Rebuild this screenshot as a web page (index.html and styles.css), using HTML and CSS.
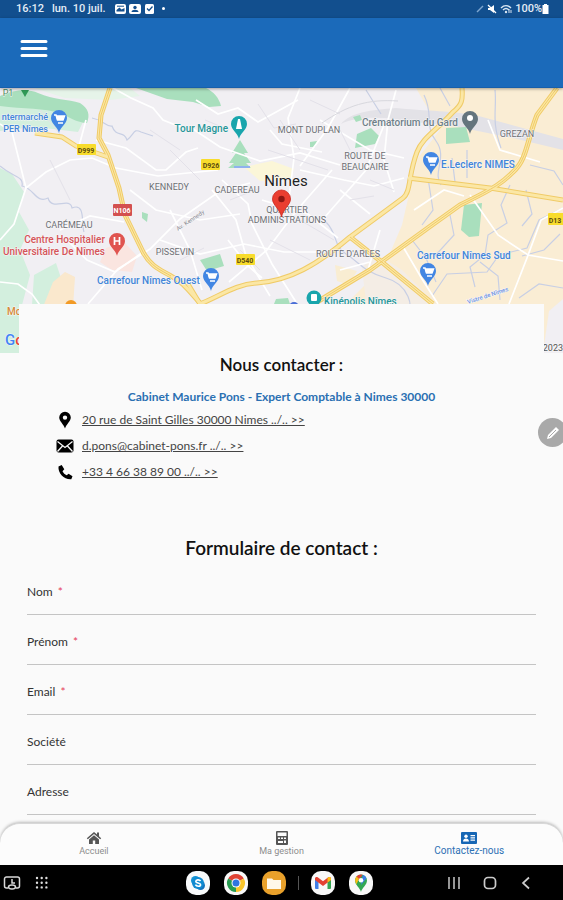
FILE: index.html
```html
<!DOCTYPE html>
<html lang="fr">
<head>
<meta charset="utf-8">
<meta name="viewport" content="width=device-width, initial-scale=1">
<title>Contactez-nous</title>
<link rel="stylesheet" href="styles.css">
</head>
<body>
<div class="status">
  <span>16:12</span>
  <span class="status-date">lun. 10 juil.</span>
  <svg class="status-notes" viewBox="0 0 54 12" aria-hidden="true">
    <rect x="1" y="1" width="11" height="10" rx="2" fill="#fff"/><path d="M2.500 8.500V7l3-2.500 2 2L10.500 5v3.500z" fill="#124f8e"/><path d="M3 3.200h7" stroke="#124f8e"/>
    <rect x="15" y="1" width="12" height="10" rx="2" fill="#fff"/><circle cx="21" cy="4.500" r="1.700" fill="#124f8e"/><path d="M17.500 9c0-3 7-3 7 0z" fill="#124f8e"/>
    <rect x="31" y="1" width="9" height="10" rx="1.500" fill="#fff"/><path d="M33 5.500l2 2 3.500-4" fill="none" stroke="#124f8e" stroke-width="1.300"/>
    <circle cx="49.500" cy="5.500" r="1.500" fill="#fff"/>
  </svg>
  <svg class="status-signals" viewBox="0 0 38 12" aria-hidden="true">
    <path d="M2 9l6-6" stroke="#7ea6cf" stroke-width="1.500"/>
    <path d="M13 5h2l4-3v8l-4-3h-2z" fill="#fff"/><path d="M13 2l8 8" stroke="#fff" stroke-width="1.300"/>
    <path d="M26 5c3-3 7-3 10 0M28 7c2-2 4-2 6 0" fill="none" stroke="#d8e5f2" stroke-width="1.400"/><circle cx="31" cy="9" r="1.200" fill="#d8e5f2"/><path d="M34 6v4M36 7v3" stroke="#d8e5f2"/>
  </svg>
  <span>100%</span>
  <svg class="status-battery" viewBox="0 0 7 12" aria-hidden="true"><path d="M2 1h3v1h1.500v9h-6V2H2z" fill="#fff"/></svg>
</div>

<header class="appbar">
  <button class="menu" type="button" aria-label="Menu"><svg viewBox="0 0 28 20" aria-hidden="true"><path d="M2 2.500h24M2 9.500h24M2 16.500h24" stroke="#fff" stroke-width="3" stroke-linecap="round"/></svg></button>
</header>

<main class="content">
  <svg class="map" viewBox="0 88 563 265" preserveAspectRatio="xMidYMid slice" role="img" aria-label="Plan de Nîmes">
    <rect y="88" width="563" height="265" fill="#f1eff3"/>
    <path d="M416 88H563V353H325L350 300 385 265 402 225 410 190 418 158 440 130z" fill="#faedd4"/>
    <path d="M372 353l-10-85 14-14 26 16 40 40z" fill="#f4ede5"/>
    <path d="M543 353l6-42 14-12v54z" fill="#f1eff3"/>
    <path d="M396 108c40 4 60 2 90 10l77 21v11l-50-12-60-12-38-4c-30-6-60-6-74 2 10-12 30-14 55-16z" fill="#e3e2e7"/>
    <g fill="#d3efde">
      <path d="M0 104l40-6 45 20-7 14-25-3-20-2-33 4z"/>
      <path d="M0 168l12 6 12 18-5 20 10 18-9 20 10 25-8 30-3 48H0z"/>
      <path d="M34 275l22-12 6 18-12 10-4 14H32z"/>
      <path d="M34 88h80l16 0 10 8-30 4-45-2z" fill="#e6f4e9"/>
    </g>
    <path d="M53 282l12-10 10 5-2 30H43z" fill="#fae8cd"/>
    <path d="M106 248l18-6 13 14-5 16-20-2-12-8z" fill="#fae5e0"/>
    <path d="M244 167l28-6 22 8-4 10-30 2z" fill="#fbf6d8"/>
    <path d="M335 265l22 6-8 14-12-4z" fill="#f9edd2"/>
    <g fill="#a9dfbd">
      <path d="M0 96c18-8 30-6 38-3 16 7 30 6 42 10 9 6 10 12 7 20-10 0-19-7-28-10-13-5-36-4-59-7z"/>
      <path d="M136 88h70c8 4 13 10 15 18l-12 1-16-5-26-3z"/>
      <path d="M240 140l8 13h-4l7 10h-5l5 5h-23l6-5h-5l7-10h-4z"/>
      <path d="M200 260l20-6 4 12-17 5z"/>
      <path d="M357 134l14-6 8 8-4 8-20 4z"/><path d="M353 117l7-2 2 5-6 2z"/>
      <path d="M446 128l20-1 4 15-24 2z"/>
      <path d="M464 205l18-2-3 33-10 1-8-7z"/>
      <path d="M276 299l12-1 2 6h-16z"/><path d="M310 142l7-1-2 6h-5z"/>
      <path d="M142 212l6 2-1 8-5-4z"/>
    </g>
    <path d="M234 167h10l6 0" stroke="#8fb2ee" stroke-width="2"/>
    <path d="M21 90l8 0-4 7z" fill="#2f9a57"/>
    <g fill="none" stroke="#c8cfe4" stroke-width="1.200">
      <path d="M0 166c14 12 24 10 22 20 12 2 14 18 26 12 4 14 22-2 24 10 14-6 9 16 12 24"/>
      <path d="M92 118c12 2 14 9 20 8 4 12 12 4 15 14 8-6 6-12 14-8l12 4"/>
      <path d="M326 222c12 12 7 24 20 32s18 18 40 24 30 30 20 40"/>
      <path d="M424 95c10 20 0 30 12 46s-4 32 5 44"/><path d="M495 90c2 20-4 30 6 58"/>
      <path d="M467 150v28M452 158l3 24M428 178l5 32-11 15"/>
      <path d="M510 185l-9 20 6 18-19 12-3 20-15 12 5 20"/>
      <path d="M563 208l-24 12-12 28-28 7-12 17-40 2-15 22"/>
      <path d="M526 190l6 24-10 12M450 215l4 20-20 22M412 240l14 18 10 24"/>
      <path d="M560 234l-16 16-22 6M563 288l-24-4-20 14M530 165l24 6 9 14M480 262l18 14 2 24"/>
      <path d="M366 90l15 24M440 88l10 18"/>
    </g>
    <g fill="none" stroke="#fff" stroke-width="1.700">
      <path d="M0 124l12 8 8 32 6 24-12 36-14 16"/>
      <path d="M26 188l20-16 24-12 22-2 24 10 42 8 60-6"/>
      <path d="M86 120l-8 30M113 88l18 10 22 10 10 12 20 8M96 140l30 8 30 22 10 0 20-18 12-4"/>
      <path d="M0 282l18 2 14 10 10 14M88 304l30-35 32-20 30-30 40-28 30-8"/>
      <path d="M67 240l20 20 28 12 28-20M130 190l26 20 44 10 40-6"/>
      <path d="M196 100l22 14 20-6 20 14 40-22M190 127l30 20 40 14 40-8 40 12"/>
      <path d="M300 88l-12 30 6 40-5 40M350 88l-22 40-28 38M222 180l26 24 4 20 20 40 24 38"/>
      <path d="M212 190l24 30 10 36 24 40M262 200l46 14 30 24M332 170l-35 40-30 40-38 32"/>
      <path d="M300 170l44 10 30 6 30-8M320 120l50 30 34 8M340 190l30 24M386 120l-20 50-42 48"/>
      <path d="M160 240l40 14 44-10 40 8 34 0M170 210l20 40 12 40M228 240l20 26 14 12"/>
      <path d="M396 90l-8 30-4 40 10 32M270 130l12 14 40 8M340 270l30-8M380 230l-12 40"/>
      <path d="M563 208l-22 12-14 38-18 46M402 245l20 34 16 25"/>
      <path d="M414 210l30-20 20 6M470 195l28 40 30 20 35 6M488 120l12 30 40 12M60 230l30-14 34 6"/>
    </g>
    <g fill="none" stroke="#e3e1e9" stroke-width="1">
      <path d="M205 120l24 10M258 104l16 24 22-4M280 120l20 30M310 100l30 14M268 150l60 20M300 220l34 20M270 240l40 20M230 200l30-12M170 150l30 30M40 110l20 24M50 160l20 40M150 130l30 20M180 260l24-12M240 250l20 20M370 180l24 10M350 200l24-4M340 130l10 20"/>
    </g>
    <path d="M398 101c-30-2-50 4-76 22" fill="none" stroke="#d8d8de"/>
    <g fill="none" stroke-linejoin="round">
      <g stroke="#f0cb67" stroke-width="5">
        <path d="M110 88l-9 27-2 23 9 17 11 33 6 27 18 37c8 15 18 18 28 24 12 6 18 15 29 27"/>
        <path d="M35 133l27 4 14 9 32 11"/>
        <path d="M188 284l12 20c20-8 36-20 57-21 32-2 60-18 93-46l30-22 23-17c8-6 5-22 14-46 5-14 20-22 36-40 9-7 10-12 9-24"/>
        <path d="M408 178l82 10 73 12M557 88l-20 27c-10 25-10 45-24 57-10 10-16 15-53 33l-28 20-62 45-58 35M350 237l33 26 50 41"/>
      </g>
      <g stroke="#fbe7a5" stroke-width="3">
        <path d="M110 88l-9 27-2 23 9 17 11 33 6 27 18 37c8 15 18 18 28 24 12 6 18 15 29 27"/>
        <path d="M35 133l27 4 14 9 32 11"/>
        <path d="M188 284l12 20c20-8 36-20 57-21 32-2 60-18 93-46l30-22 23-17c8-6 5-22 14-46 5-14 20-22 36-40 9-7 10-12 9-24"/>
        <path d="M408 178l82 10 73 12M557 88l-20 27c-10 25-10 45-24 57-10 10-16 15-53 33l-28 20-62 45-58 35M350 237l33 26 50 41"/>
      </g>
      <path stroke="#f0cb67" stroke-width="1" d="M110 88l-9 27-2 23 9 17 11 33 6 27 18 37c8 15 18 18 28 24M557 88l-20 27c-10 25-10 45-24 57-10 10-16 15-53 33l-28 20-62 45-58 35M350 237l33 26 50 41"/>
    </g>
    <g class="shield" text-anchor="middle">
      <rect x="77" y="144" width="19" height="11" rx="1" fill="#f8dc2c"/><text x="86" y="153">D999</text>
      <rect x="201" y="159" width="19" height="11" rx="1" fill="#f8dc2c"/><text x="211" y="168">D926</text>
      <rect x="236" y="254" width="19" height="11" rx="1" fill="#f8dc2c"/><text x="245" y="263">D540</text>
      <rect x="548" y="213" width="20" height="12" rx="1" fill="#f8dc2c"/><text x="555" y="223">D13</text>
      <rect x="113" y="204" width="19" height="12" rx="1" fill="#d3504f"/><text class="national" x="122" y="213">N106</text>
    </g>
    <g class="area" text-anchor="middle">
      <text x="309" y="133">MONT DUPLAN</text>
      <text x="365" y="159">ROUTE DE</text><text x="365" y="170">BEAUCAIRE</text>
      <text x="517" y="137">GREZAN</text><text x="169" y="190">KENNEDY</text><text x="237" y="193">CADEREAU</text>
      <text x="69" y="228">CARÉMEAU</text><text x="175" y="255">PISSEVIN</text>
      <text x="287" y="213">QUARTIER</text><text x="287" y="223">ADMINISTRATIONS</text>
      <text x="348" y="257">ROUTE D'ARLES</text>
      <text x="8" y="96" fill="#4b8b61">P1</text>
    </g>
    <text class="street" transform="translate(178 231) rotate(-34)">Av. Kennedy</text>
    <text class="city" x="286" y="186" text-anchor="middle">Nîmes</text>
    <g class="place">
      <g class="small-place" fill="#4285d8"><text x="48" y="120" text-anchor="end">ntermarché</text><text x="48" y="132" text-anchor="end">PER Nîmes</text></g>
      <g fill="#4285d8"><text x="97" y="284">Carrefour Nîmes Ouest</text><text x="417" y="259">Carrefour Nîmes Sud</text><text x="441" y="168">E.Leclerc NIMES</text></g>
      <g fill="#27969a"><text x="228" y="132" text-anchor="end">Tour Magne</text><text x="324" y="305">Kinépolis Nîmes</text></g>
      <text x="458" y="126" text-anchor="end" fill="#6e7f89">Crématorium du Gard</text>
      <g fill="#d55358" text-anchor="end"><text x="105" y="243">Centre Hospitalier</text><text x="105" y="255">Universitaire De Nîmes</text></g>
      <text x="7" y="315" fill="#d58a38">Mc</text>
      <text x="468" y="304" class="street river" transform="rotate(-18 468 304)">Vistre de Nîmes</text>
    </g>
    <defs>
      <path id="pin" d="M0 12C-1 6-8 3-8-3a8 8 0 0 1 16 0C8 3 1 6 0 12z"/>
      <path id="cart" d="M-5-6h2l1.500 5H4l1.500-4h-8M-1 2h5" fill="none" stroke="#fff" stroke-width="1.500"/>
      <path id="cartfill" d="M-3-5h8L4-1h-6z" fill="#fff"/>
    </defs>
    <g fill="#4286e3"><g transform="translate(59 121)"><use href="#pin"/><use href="#cart"/><use href="#cartfill"/></g><g transform="translate(211 279)"><use href="#pin"/><use href="#cart"/><use href="#cartfill"/></g><g transform="translate(431 163)"><use href="#pin"/><use href="#cart"/><use href="#cartfill"/></g><g transform="translate(428 274)"><use href="#pin"/><use href="#cart"/><use href="#cartfill"/></g></g>
    <use href="#pin" transform="translate(239 127)" fill="#19a5ac"/><path d="M238 119h2l2 10h-6z" fill="#fff"/>
    <use href="#pin" transform="translate(470 122)" fill="#64747d"/><circle cx="470" cy="118" r="3" fill="#fff"/>
    <use href="#pin" transform="translate(117 244)" fill="#e0544f"/><path d="M114.500 237v8M119.500 237v8M114.500 241h5" stroke="#fff" stroke-width="1.700"/>
    <circle cx="314" cy="298" r="7.500" fill="#19a5ac"/><rect x="311" y="294" width="6" height="7" rx="1" fill="#fff"/>
    <circle cx="71" cy="306" r="6" fill="#f29a25"/><circle cx="294" cy="307" r="5" fill="#4a6ed6"/>
    <path d="M281.500 217C280 209 272.500 205 272.500 199a9 9 0 0 1 18 0C290.500 205 283 209 281.500 217z" fill="#ea3e30" stroke="#c8281f" stroke-width=".8"/><circle cx="281.500" cy="199" r="3.200" fill="#8d1712"/>
    <g class="google"><text x="5" y="345"><tspan fill="#4285f4">G</tspan><tspan fill="#ea4335">o</tspan></text></g>
    <text class="copyright" x="563" y="351" text-anchor="end">2023</text>
  </svg>

  <section class="card">
    <h1 class="title">Nous contacter :</h1>
    <p class="firm">Cabinet Maurice Pons - Expert Comptable à Nimes 30000</p>
    <ul class="contacts">
      <li><svg viewBox="0 0 18 18" aria-hidden="true"><path fill-rule="evenodd" d="M9 17.500C7.800 13.500 3.200 10 3.200 6.500a5.800 5.800 0 0 1 11.600 0C14.800 10 10.200 13.500 9 17.500zM9 4.400a2.200 2.200 0 1 0 0 4.400 2.200 2.200 0 0 0 0-4.400z"/></svg><a href="#adresse">20 rue de Saint Gilles 30000 Nimes ../.. &gt;&gt;</a></li>
      <li><svg viewBox="0 0 18 18" aria-hidden="true"><rect x=".5" y="2.500" width="17" height="13" rx="2"/><path d="M1.500 4.500L9 10.500l7.500-6M1.500 14.500l5-5.500M16.500 14.500l-5-5.500" fill="none" stroke="#fafafa" stroke-width="1.300"/></svg><a href="mailto:d.pons@cabinet-pons.fr">d.pons@cabinet-pons.fr ../.. &gt;&gt;</a></li>
      <li><svg viewBox="0 0 18 18" aria-hidden="true"><path d="M2.500 3.500L5.700 2l2.600 4.200-1.800 2c1 2 2.300 3.200 4.200 4.100l1.900-1.600 3.900 2.600-1.200 3C8.500 17 1.800 10.500 2.500 3.500z"/></svg><a href="tel:+33466388900">+33 4 66 38 89 00 ../.. &gt;&gt;</a></li>
    </ul>
  </section>

  <form class="form">
    <h2 class="title form-title">Formulaire de contact :</h2>
    <div class="field"><label for="nom">Nom <span class="req">*</span></label><input id="nom" type="text" required></div>
    <div class="field"><label for="prenom">Prénom <span class="req">*</span></label><input id="prenom" type="text" required></div>
    <div class="field"><label for="email">Email <span class="req">*</span></label><input id="email" type="email" required></div>
    <div class="field"><label for="societe">Société</label><input id="societe" type="text"></div>
    <div class="field"><label for="adresse">Adresse</label><input id="adresse" type="text"></div>
  </form>
</main>

<button class="pen" type="button" aria-label="Stylet"><svg viewBox="0 0 16 16" aria-hidden="true"><path d="M2 14l1-4 8-8 3 3-8 8z" fill="#fff"/><path d="M4 12l7-7" stroke="#aaa"/></svg></button>

<nav class="tabs">
  <a href="#accueil"><svg viewBox="0 0 16 14" aria-hidden="true"><path d="M8 1L.8 7.200l1 1L8 3l6.200 5.200 1-1L13 5.300V1.500h-2v2.100z"/><path d="M8 4.200L3 8.400V13h3.800V9.500h2.400V13H13V8.400z"/></svg>Accueil</a>
  <a href="#gestion"><svg viewBox="0 0 16 14" aria-hidden="true"><path fill-rule="evenodd" d="M3 0h10a1 1 0 0 1 1 1v12a1 1 0 0 1-1 1H3a1 1 0 0 1-1-1V1a1 1 0 0 1 1-1zM3.500 1.500v3.500h9V1.500zM4 6.500V8h2V6.500zM7 6.500V8h2V6.500zM10 6.500V8h2V6.500zM4 10v2h5v-2zM10 9.500V12h2V9.500z"/></svg>Ma gestion</a>
  <a class="active" href="#contact" aria-current="page"><svg viewBox="0 0 16 14" aria-hidden="true"><rect y="1" width="16" height="12" rx="1"/><g fill="#fff"><circle cx="5" cy="5.300" r="1.700"/><path d="M2 10.500c0-4 6-4 6 0zM9.500 4h4.500v1.200H9.500zM9.500 6.300h4.500v1.200H9.500zM9.500 8.600h4.500v1.200H9.500z"/></g></svg>Contactez-nous</a>
</nav>

<footer class="dock">
  <div class="dock-group shortcuts">
    <button type="button" aria-label="Récents"><svg class="glyph" viewBox="0 0 18 18" fill="none" stroke="#d8d8d8" stroke-width="1.500" aria-hidden="true"><path d="M5 14H3.500a2 2 0 0 1-2-2V5a2 2 0 0 1 2-2h11a2 2 0 0 1 2 2v7a2 2 0 0 1-2 2H13M9 5v4h3"/><ellipse cx="9" cy="13" rx="3.500" ry="2"/></svg></button>
    <button type="button" aria-label="Applications"><svg class="glyph" viewBox="0 0 18 18" fill="none" stroke="#ddd" stroke-width="2.400" stroke-linecap="round" stroke-dasharray="0 4.700" aria-hidden="true"><path d="M4 4h10M4 8.700h10M4 13.400h10"/></svg></button>
  </div>
  <div class="dock-group apps">
    <button type="button" aria-label="Skype"><svg viewBox="0 0 24 24" aria-hidden="true"><rect width="24" height="24" rx="10" fill="#f8fafb"/><circle cx="9.500" cy="9.500" r="4.500" fill="#1594d6"/><circle cx="14.500" cy="14.500" r="4.500" fill="#1473bd"/><circle cx="12" cy="12" r="6" fill="#108bd1"/><path d="M14.500 10C13.500 8.300 9.800 8.500 9.800 10.500c0 2 4.800 1 4.800 3.200 0 2-4.200 2-5.200 0" fill="none" stroke="#fff" stroke-width="1.600"/></svg></button>
    <button type="button" aria-label="Chrome"><svg viewBox="0 0 24 24" aria-hidden="true"><rect width="24" height="24" rx="10" fill="#f8f8f8"/><path d="M12 12L4.200 7.500a9 9 0 0 1 15.600 0z" fill="#df4335"/><path d="M12 12L19.800 7.500A9 9 0 0 1 12 21z" fill="#f9c52b"/><path d="M12 12v9A9 9 0 0 1 4.200 7.500z" fill="#279b50"/><circle cx="12" cy="12" r="4.500" fill="#fff"/><circle cx="12" cy="12" r="3.500" fill="#2f74e0"/></svg></button>
    <button type="button" aria-label="Mes fichiers"><svg viewBox="0 0 24 24" aria-hidden="true"><rect width="24" height="24" rx="10" fill="#e9a12b"/><path d="M5 7.500h5l1.500 1.500H19v9H5z" fill="#fff8e9"/></svg></button>
    <span class="sep"></span>
    <button type="button" aria-label="Gmail"><svg viewBox="0 0 24 24" aria-hidden="true"><rect width="24" height="24" rx="10" fill="#f8f8f8"/><path d="M4 8l3.500 2.500V18H5a1 1 0 0 1-1-1z" fill="#3f7ee8"/><path d="M20 8l-3.500 2.500V18H19a1 1 0 0 0 1-1z" fill="#35a653"/><path d="M4 9V7.500c0-1.500 1.500-2 2.700-1.200L12 10.300l5.300-4c1.200-.8 2.700-.3 2.700 1.200V9l-8 6z" fill="#e34133"/><path d="M16.500 7v4.600L20 9V7.500c0-1.500-1.500-2-2.700-1.200z" fill="#f9bd17"/></svg></button>
    <button type="button" aria-label="Maps"><svg viewBox="0 0 24 24" aria-hidden="true"><rect width="24" height="24" rx="10" fill="#f8f8f8"/><path d="M12 21C11.200 17 6 14 6 9.500a6 6 0 0 1 12 0C18 14 12.800 17 12 21z" fill="#32a852"/><path d="M7.400 5.500A6 6 0 0 1 13.800 3.800L9.500 9z" fill="#df4335"/><path d="M13.800 3.800A6 6 0 0 1 17.500 7.200L12 14z" fill="#3b7de9"/><path d="M7.400 5.500L10 7.800 7.500 13.200C6 11 5.500 8 7.400 5.500z" fill="#f9bc15"/><circle cx="12" cy="9.300" r="2.300" fill="#fff"/></svg></button>
  </div>
  <div class="dock-group system">
    <button type="button" aria-label="Applications récentes"><svg class="glyph" viewBox="0 0 18 18" stroke="#bbb" stroke-width="1.600" aria-hidden="true"><path d="M4 3v12M9 3v12M14 3v12"/></svg></button>
    <button type="button" aria-label="Écran d'accueil"><svg class="glyph" viewBox="0 0 18 18" fill="none" stroke="#ccc" stroke-width="1.700" aria-hidden="true"><rect x="3.500" y="3.500" width="11" height="11" rx="3.500"/></svg></button>
    <button type="button" aria-label="Retour"><svg class="glyph" viewBox="0 0 18 18" fill="none" stroke="#ccc" stroke-width="1.700" aria-hidden="true"><path d="M12 3.500L6 9l6 5.500"/></svg></button>
  </div>
</footer>
</body>
</html>
```
FILE: styles.css
```css
* { box-sizing: border-box; }
body {
  margin: 0;
  height: 100vh;
  display: flex;
  flex-direction: column;
  overflow: hidden;
  background: #fafafa;
  color: #222;
  font-family: Lato, "Liberation Sans", sans-serif;
}
button { border: 0; padding: 0; background: none; display: flex; }
svg { display: block; flex: none; }

.status {
  flex: none;
  height: 18px;
  padding: 0 14px 0 16px;
  display: flex;
  align-items: center;
  background: #124f8e;
  color: #e4edf6;
  font: 500 11px/18px Roboto, sans-serif;
}
.status-date { margin-left: 8px; }
.status-notes { width: 54px; height: 12px; margin-left: 8px; }
.status-signals { width: 38px; height: 12px; margin-left: auto; margin-right: 2px; }
.status-battery { width: 7px; height: 12px; }

.appbar {
  flex: none;
  height: 70px;
  padding: 0 20px;
  display: flex;
  align-items: flex-start;
  background: #1b6aba;
  border-bottom: 1px solid #175fab;
  box-shadow: 0 1px 3px rgba(0, 0, 0, .35);
  z-index: 1;
}
.menu { margin-top: 21px; }
.menu svg { width: 28px; height: 20px; }

.content { flex: 1; min-height: 0; overflow-y: auto; scrollbar-width: none; }
.map { width: 100%; height: 265px; font-family: Roboto, sans-serif; }
.map text { paint-order: stroke; stroke: #f8f7f8; stroke-width: 1px; stroke-linejoin: round; }
.map .shield text { stroke: none; font-size: 7px; font-weight: 700; fill: #5c4c10; }
.map .shield .national { fill: #fff; }
.area { font-size: 9px; fill: #6c6f75; }
.place { font-size: 10px; font-weight: 500; }
.small-place { font-size: 9px; }
.map .street { font-size: 6px; fill: #8b8b94; }
.map .river { fill: #6b91e0; }
.city { font-size: 15px; fill: #222; }
.google { font-size: 15px; font-weight: 500; }
.copyright { font-size: 9px; fill: #555; }

.card {
  position: relative;
  margin: -49px 19px 0;
  padding: 48px 36px 0;
  background: #fafafa;
}
.title {
  margin: 0;
  text-align: center;
  color: #111;
  font-size: 17px;
  line-height: 26px;
  font-weight: 600;
}
.firm {
  margin: 12px 0 3px;
  text-align: center;
  color: #2a70b2;
  font-size: 12px;
  line-height: 14px;
  font-weight: 700;
}
.contacts { margin: 0; padding: 0; list-style: none; }
.contacts li { height: 26px; display: flex; align-items: center; gap: 8px; padding-left: 1px; }
.contacts li svg { width: 18px; height: 18px; }
.contacts a { color: #444; font-size: 12px; line-height: 18px; }

.form { padding: 50px 27px 0; }
.form-title { margin-bottom: 23px; font-size: 19px; }
.field { display: flex; flex-direction: column; margin-bottom: 19px; }
.field label { font-size: 12px; line-height: 16px; color: #333; }
.req { margin-left: 2px; color: #e5405a; }
.field input {
  height: 15px;
  padding: 0;
  border: 0;
  border-bottom: 1px solid #c4c4c4;
  border-radius: 0;
  background: none;
  outline: 0;
}

.pen {
  position: fixed;
  top: 418px;
  right: -4px;
  width: 29px;
  height: 29px;
  border-radius: 50%;
  background: #a9a9a9;
  align-items: center;
  justify-content: center;
}
.pen svg { width: 16px; height: 16px; }

.tabs {
  flex: none;
  height: 42px;
  display: flex;
  background: #fcfcfc;
  border-top: 1px solid #d8d8d8;
  border-radius: 20px 20px 0 0;
  box-shadow: 0 -1px 3px rgba(0, 0, 0, .25);
  font: 9px/12px Roboto, sans-serif;
  z-index: 1;
}
.tabs a {
  flex: 1;
  padding-top: 7px;
  display: flex;
  flex-direction: column;
  align-items: center;
  color: #8c8c8c;
  text-decoration: none;
}
.tabs svg { width: 16px; height: 14px; fill: #555; }
.tabs .active { color: #2c70b4; font-size: 10px; }
.tabs .active svg { fill: #1767b5; }

.dock {
  flex: none;
  height: 35px;
  padding: 0 28px 0 24px;
  display: grid;
  grid-template-columns: 1fr auto 1fr;
  align-items: center;
  background: #000;
}
.dock-group { display: flex; align-items: center; gap: 12px; }
.dock-group .glyph { width: 18px; height: 18px; }
.shortcuts { margin-left: -21px; }
.apps { gap: 14px; }
.apps svg { width: 24px; height: 24px; }
.sep { width: 1px; height: 14px; margin: 0 -2px; background: #555; }
.system { justify-content: flex-end; gap: 18px; }
```
